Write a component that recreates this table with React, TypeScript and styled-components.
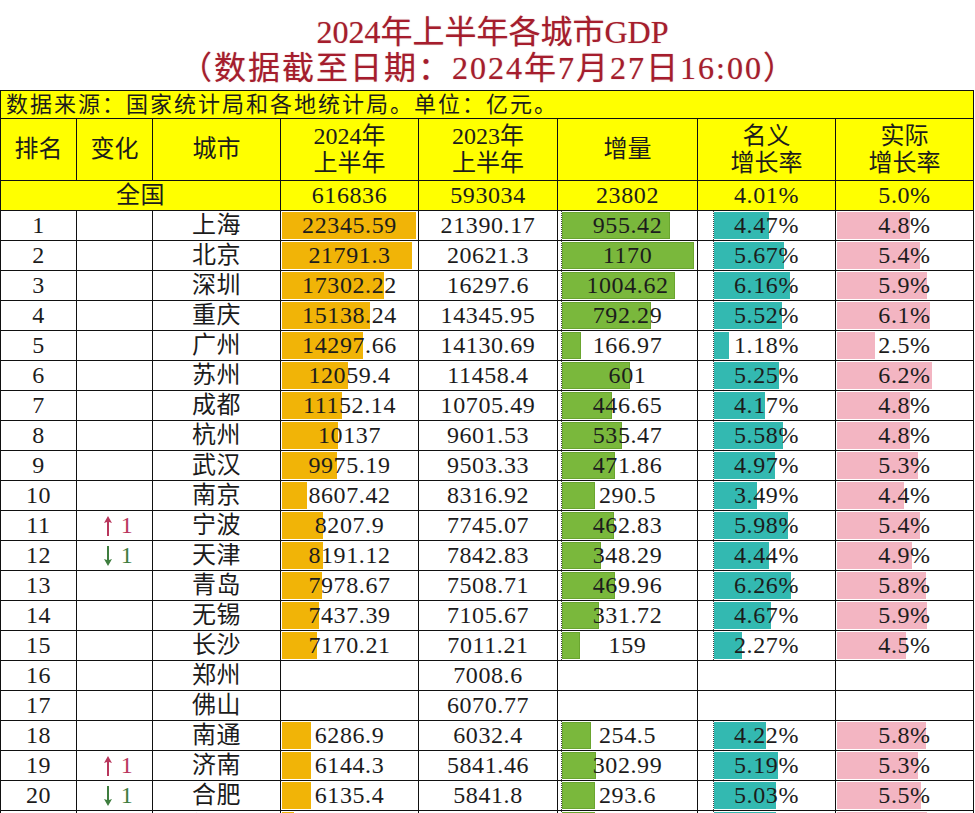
import React from "react";
import styled, { createGlobalStyle } from "styled-components";

const Global = createGlobalStyle`
  html, body { margin: 0; padding: 0; background: #fff; }
  body { width: 975px; overflow: hidden; }
`;

const FONT = `"Liberation Serif", "Noto Sans CJK SC", serif`;

const Page = styled.div`
  width: 975px;
  font-family: ${FONT};
  color: #1c1c1c;
`;

const TitleBlock = styled.header`
  padding: 14px 0 4px;
  text-align: center;
  color: #a51d2d;
  font-size: 32px;
  line-height: 36px;
  text-shadow: 0 0 1px rgba(165, 29, 45, 0.5);
`;

const TitleLine = styled.div<{ $shift?: number; $spacing?: number }>`
  white-space: nowrap;
  padding-left: ${(p) => p.$shift ?? 0}px;
  letter-spacing: ${(p) => p.$spacing ?? 0}px;
`;

const Table = styled.table`
  border-collapse: collapse;
  table-layout: fixed;
  width: 974px;
`;

const SourceCell = styled.td`
  background: #ffff00;
  border: 1px solid #111;
  height: 27px;
  padding: 0 0 0 5px;
  font-size: 22px;
  letter-spacing: 2px;
  line-height: 27px;
  white-space: nowrap;
  text-align: left;
`;

const HeadCell = styled.th`
  background: #ffff00;
  border: 1px solid #111;
  height: 61px;
  padding: 0;
  font-weight: normal;
  font-size: 24px;
  line-height: 27px;
  text-align: center;
  vertical-align: middle;
`;

const Cell = styled.td<{ $yellow?: boolean }>`
  position: relative;
  background: ${(p) => (p.$yellow ? "#ffff00" : "#fff")};
  border: 1px solid #111;
  height: 29px;
  max-height: 29px;
  padding: 0;
  font-size: 24px;
  line-height: 29px;
  text-align: center;
  white-space: nowrap;
  letter-spacing: 0.6px;
  overflow: hidden;
`;

const Bar = styled.div<{ $color: string; $left: number; $edge?: string }>`
  position: absolute;
  left: ${(p) => p.$left}px;
  top: 1px;
  bottom: 1px;
  background: ${(p) => p.$color};
  box-shadow: ${(p) => (p.$edge ? `inset 0 0 0 1px ${p.$edge}` : "none")};
`;

const Axis = styled.div<{ $left: number }>`
  position: absolute;
  left: ${(p) => p.$left}px;
  top: 0;
  bottom: 0;
  border-left: 1px dotted #444;
`;

const Value = styled.span`
  position: relative;
`;

const Change = styled.span<{ $up: boolean }>`
  display: flex;
  align-items: center;
  justify-content: center;
  gap: 9px;
  height: 29px;
  padding-left: 8px;
  color: ${(p) => (p.$up ? "#b8365c" : "#3e7d3e")};
  svg { display: block; }
`;

const ArrowIcon = ({ up }: { up: boolean }) => (
  <svg width="8" height="20" viewBox="0 0 8 20" style={{ transform: up ? "none" : "rotate(180deg)" }}>
    <path d="M4 0 L8 7 L5 6 L5 20 L3 20 L3 6 L0 7 Z" fill="currentColor" />
  </svg>
);

type Row = {
  rank: number;
  city: string;
  v24: string;
  b24: number;
  v23: string;
  inc: string;
  nom: string;
  real: string;
  change?: "up" | "down";
};

const rows: Row[] = [
  { rank: 1, city: "上海", v24: "22345.59", b24: 134, v23: "21390.17", inc: "955.42", nom: "4.47%", real: "4.8%" },
  { rank: 2, city: "北京", v24: "21791.3", b24: 130, v23: "20621.3", inc: "1170", nom: "5.67%", real: "5.4%" },
  { rank: 3, city: "深圳", v24: "17302.22", b24: 102, v23: "16297.6", inc: "1004.62", nom: "6.16%", real: "5.9%" },
  { rank: 4, city: "重庆", v24: "15138.24", b24: 88, v23: "14345.95", inc: "792.29", nom: "5.52%", real: "6.1%" },
  { rank: 5, city: "广州", v24: "14297.66", b24: 81, v23: "14130.69", inc: "166.97", nom: "1.18%", real: "2.5%" },
  { rank: 6, city: "苏州", v24: "12059.4", b24: 66, v23: "11458.4", inc: "601", nom: "5.25%", real: "6.2%" },
  { rank: 7, city: "成都", v24: "11152.14", b24: 60, v23: "10705.49", inc: "446.65", nom: "4.17%", real: "4.8%" },
  { rank: 8, city: "杭州", v24: "10137", b24: 56, v23: "9601.53", inc: "535.47", nom: "5.58%", real: "4.8%" },
  { rank: 9, city: "武汉", v24: "9975.19", b24: 55, v23: "9503.33", inc: "471.86", nom: "4.97%", real: "5.3%" },
  { rank: 10, city: "南京", v24: "8607.42", b24: 25, v23: "8316.92", inc: "290.5", nom: "3.49%", real: "4.4%" },
  { rank: 11, city: "宁波", v24: "8207.9", b24: 41, v23: "7745.07", inc: "462.83", nom: "5.98%", real: "5.4%", change: "up" },
  { rank: 12, city: "天津", v24: "8191.12", b24: 41, v23: "7842.83", inc: "348.29", nom: "4.44%", real: "4.9%", change: "down" },
  { rank: 13, city: "青岛", v24: "7978.67", b24: 40, v23: "7508.71", inc: "469.96", nom: "6.26%", real: "5.8%" },
  { rank: 14, city: "无锡", v24: "7437.39", b24: 37, v23: "7105.67", inc: "331.72", nom: "4.67%", real: "5.9%" },
  { rank: 15, city: "长沙", v24: "7170.21", b24: 35, v23: "7011.21", inc: "159", nom: "2.27%", real: "4.5%" },
  { rank: 16, city: "郑州", v24: "", b24: 0, v23: "7008.6", inc: "", nom: "", real: "" },
  { rank: 17, city: "佛山", v24: "", b24: 0, v23: "6070.77", inc: "", nom: "", real: "" },
  { rank: 18, city: "南通", v24: "6286.9", b24: 29, v23: "6032.4", inc: "254.5", nom: "4.22%", real: "5.8%" },
  { rank: 19, city: "济南", v24: "6144.3", b24: 29, v23: "5841.46", inc: "302.99", nom: "5.19%", real: "5.3%", change: "up" },
  { rank: 20, city: "合肥", v24: "6135.4", b24: 29, v23: "5841.8", inc: "293.6", nom: "5.03%", real: "5.5%", change: "down" },
  { rank: 21, city: "福州", v24: "6062.3", b24: 12, v23: "5770.9", inc: "291.4", nom: "5.05%", real: "5.9%" },
];

const widths = [76, 76, 128, 138, 139, 140, 138, 138];

export default function App() {
  return (
    <Page>
      <Global />
      <TitleBlock>
        <TitleLine $shift={10}>2024年上半年各城市GDP</TitleLine>
        <TitleLine $shift={2} $spacing={2}>（数据截至日期：2024年7月27日16:00）</TitleLine>
      </TitleBlock>
      <Table>
        <colgroup>
          {widths.map((w, i) => (
            <col key={i} style={{ width: w }} />
          ))}
        </colgroup>
        <tbody>
          <tr>
            <SourceCell colSpan={8}>数据来源：国家统计局和各地统计局。单位：亿元。</SourceCell>
          </tr>
          <tr>
            <HeadCell>排名</HeadCell>
            <HeadCell>变化</HeadCell>
            <HeadCell>城市</HeadCell>
            <HeadCell>2024年<br />上半年</HeadCell>
            <HeadCell>2023年<br />上半年</HeadCell>
            <HeadCell>增量</HeadCell>
            <HeadCell>名义<br />增长率</HeadCell>
            <HeadCell>实际<br />增长率</HeadCell>
          </tr>
          <tr>
            <Cell $yellow colSpan={3}>全国</Cell>
            <Cell $yellow>616836</Cell>
            <Cell $yellow>593034</Cell>
            <Cell $yellow>23802</Cell>
            <Cell $yellow>4.01%</Cell>
            <Cell $yellow>5.0%</Cell>
          </tr>
          {rows.map((r) => {
            const inc = parseFloat(r.inc);
            const nom = parseFloat(r.nom);
            const real = parseFloat(r.real);
            return (
              <tr key={r.rank}>
                <Cell>{r.rank}</Cell>
                <Cell>
                  {r.change && (
                    <Change $up={r.change === "up"}>
                      <ArrowIcon up={r.change === "up"} />
                      <span>1</span>
                    </Change>
                  )}
                </Cell>
                <Cell>{r.city}</Cell>
                <Cell>
                  {r.b24 > 0 && <Bar $color="#f1b407" $left={1} style={{ width: r.b24 }} />}
                  <Value>{r.v24}</Value>
                </Cell>
                <Cell>{r.v23}</Cell>
                <Cell>
                  {r.inc && (
                    <>
                      <Bar $color="#7ab83c" $edge="#6aa52f" $left={4} style={{ width: Math.round((inc / 1170) * 132) }} />
                      <Axis $left={3} />
                    </>
                  )}
                  <Value>{r.inc}</Value>
                </Cell>
                <Cell>
                  {r.nom && (
                    <>
                      <Bar $color="#33b9b1" $left={16} style={{ width: Math.round(nom * 12.3) }} />
                      <Axis $left={15} />
                    </>
                  )}
                  <Value>{r.nom}</Value>
                </Cell>
                <Cell>
                  {r.real && <Bar $color="#f3b5c2" $left={1} style={{ width: Math.round(real * 15.3) }} />}
                  <Value>{r.real}</Value>
                </Cell>
              </tr>
            );
          })}
        </tbody>
      </Table>
    </Page>
  );
}
